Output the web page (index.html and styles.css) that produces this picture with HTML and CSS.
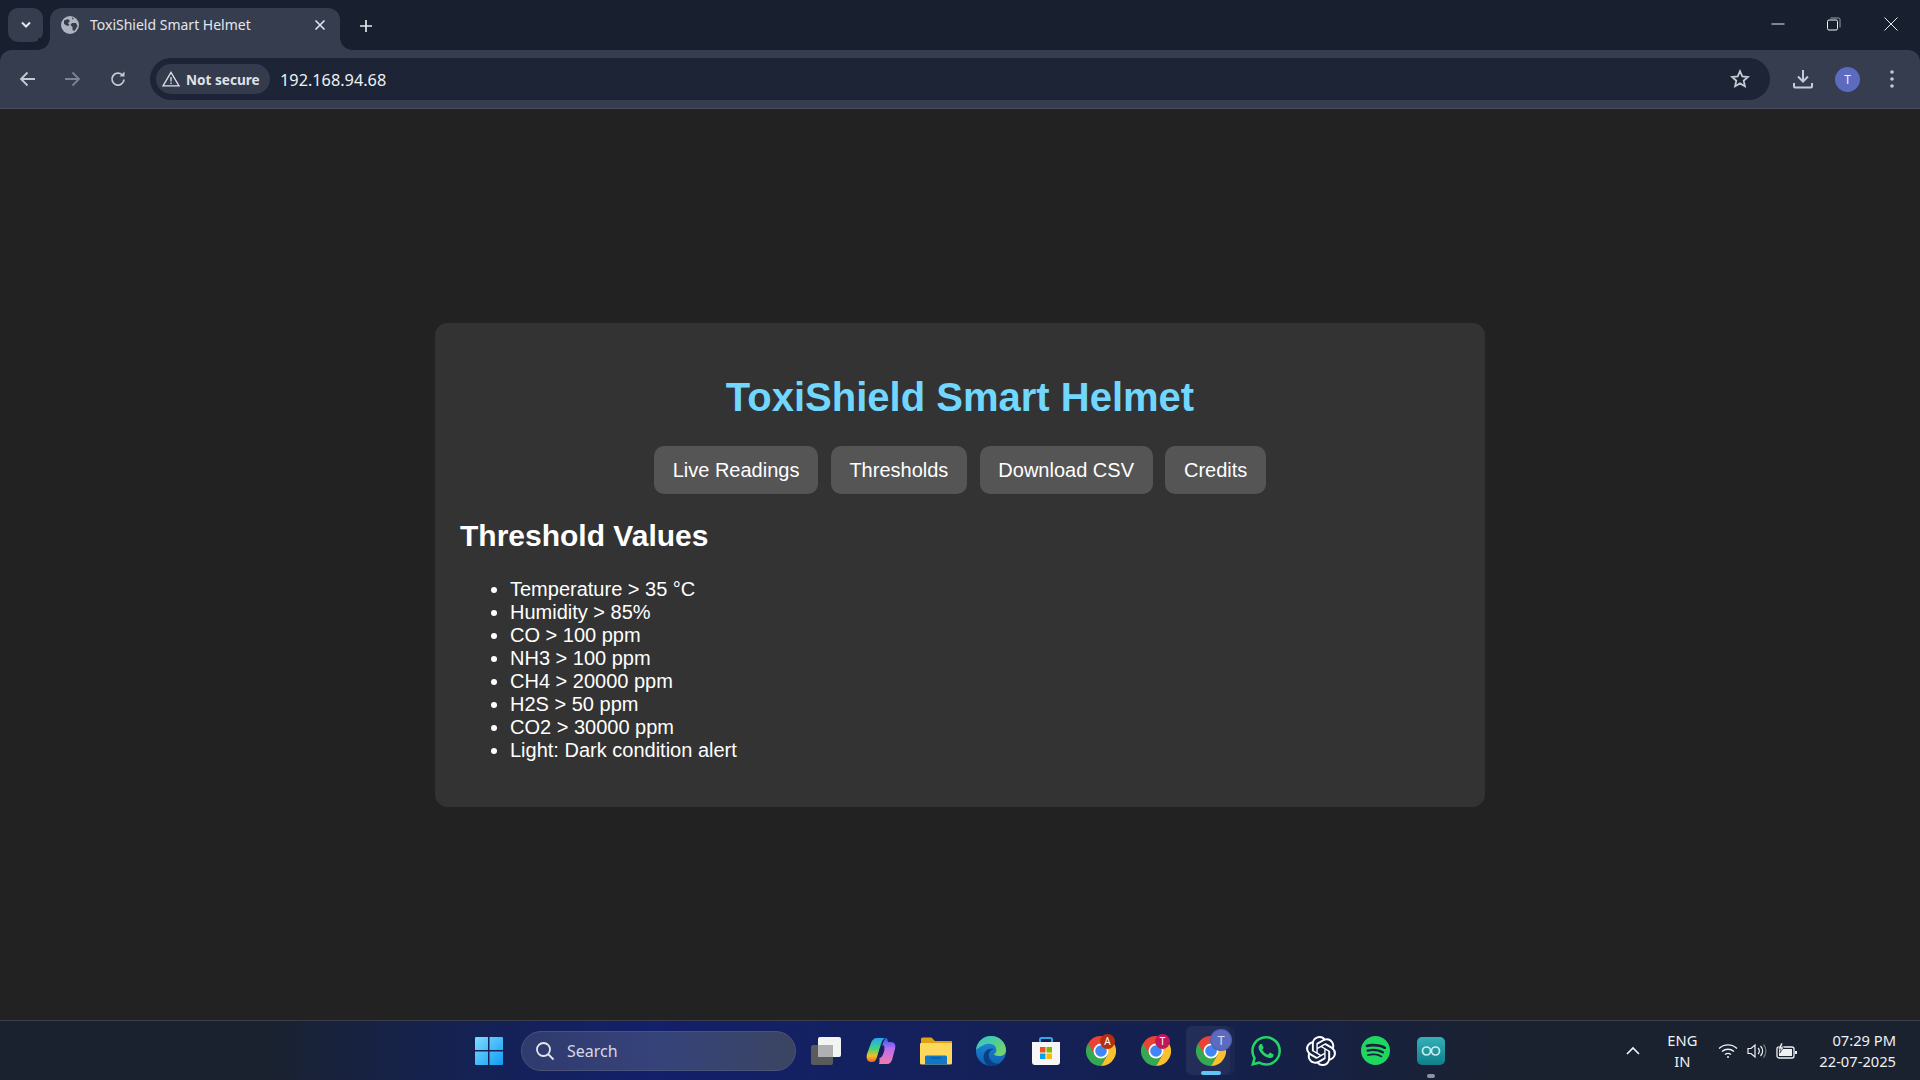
FILE: index.html
```html
<!DOCTYPE html>
<html lang="en">
<head>
<meta charset="utf-8">
<title>ToxiShield Smart Helmet</title>
<link rel="stylesheet" href="styles.css">
</head>
<body>
<svg class="defs" width="0" height="0" aria-hidden="true">
  <symbol id="chrome" viewBox="0 0 30 30">
    <path fill="#34a853" d="M2 7.5A15 15 0 0 0 15 30L21.5 18.75 15 15Z"/>
    <path fill="#fbc02d" d="M28 7.5A15 15 0 0 1 15 30L21.5 18.75 15 7.5Z"/>
    <path fill="#ea4335" d="M2 7.5A15 15 0 0 1 28 7.5H15L8.5 18.75Z"/>
    <circle cx="15" cy="15" r="7.5" fill="#fff"/>
    <circle cx="15" cy="15" r="5.8" fill="#4285f4"/>
  </symbol>
</svg>

<header class="tabstrip">
  <button class="tab-search" aria-label="Search tabs">
    <svg width="12" height="8" viewBox="0 0 12 8"><path d="M2 1.500l4 4 4-4" fill="none" stroke="#e3e6ec" stroke-width="2"/></svg>
  </button>
  <div class="tab">
    <svg class="favicon" width="18" height="18" viewBox="0 0 18 18">
      <circle cx="9" cy="9" r="9" fill="#aeb3bd"/>
      <path fill="#363d4e" d="M3 4.500 7 3l2 2-2 2 1.500 2-2 1L3 8ZM11 7h4l1.500 3-3 5-2-1V11L9.500 9ZM11 1.500l2 .8-1.500 1.500Z"/>
    </svg>
    <span class="tab-title">ToxiShield Smart Helmet</span>
    <svg class="tab-close" width="12" height="12" viewBox="0 0 12 12"><path d="M1.500 1.500l9 9m0-9l-9 9" stroke="#e3e6ec" stroke-width="1.600"/></svg>
  </div>
  <svg class="new-tab" width="14" height="14" viewBox="0 0 14 14"><path d="M7 1v12M1 7h12" stroke="#e3e6ec" stroke-width="1.700"/></svg>
  <div class="window-controls">
    <svg width="14" height="14" viewBox="0 0 14 14"><path d="M0.500 7h13" stroke="#e6e8ec" stroke-width="1"/></svg>
    <svg width="14" height="14" viewBox="0 0 14 14"><rect x="0.500" y="3" width="10" height="10" rx="1.500" fill="none" stroke="#f0f1f4"/><path d="M3.500 1h8a1.500 1.500 0 0 1 1.500 1.500v8" fill="none" stroke="#9aa0ab"/></svg>
    <svg width="14" height="14" viewBox="0 0 14 14"><path d="M.5.500l13 13m0-13l-13 13" stroke="#e6e8ec" stroke-width="1"/></svg>
  </div>
</header>

<nav class="toolbar">
  <svg class="tool back" width="18" height="16" viewBox="0 0 18 16"><path d="M16 8H2M8.500 1.500 2 8l6.500 6.500" fill="none" stroke="#c4c9d2" stroke-width="1.800"/></svg>
  <svg class="tool fwd" width="18" height="16" viewBox="0 0 18 16"><path d="M2 8h14M9.500 1.500 16 8l-6.500 6.500" fill="none" stroke="#7d8390" stroke-width="1.800"/></svg>
  <svg class="tool reload" width="18" height="18" viewBox="0 0 18 18"><path d="M15 9.500a6 6 0 1 1-1.800-4.700" fill="none" stroke="#c4c9d2" stroke-width="1.800"/><path d="M15.500 1.500v5h-5z" fill="#c4c9d2"/></svg>
  <div class="omnibox">
    <div class="chip">
      <svg width="18" height="16" viewBox="0 0 18 16"><path d="M9 1.300 17 14.800H1Z" fill="none" stroke="#dfe2e8" stroke-width="1.300"/><path d="M9 6v4.500M9 11.500v1.500" stroke="#dfe2e8" stroke-width="1.300"/></svg>
      <span>Not secure</span>
    </div>
    <span class="url">192.168.94.68</span>
    <svg class="star" width="20" height="20" viewBox="0 0 20 20"><path d="M10 2.200l2.300 5.200 5.600.6-4.200 3.700 1.200 5.500L10 14.400l-4.900 2.800 1.200-5.500L2.100 8l5.600-.6Z" fill="none" stroke="#c4c9d2" stroke-width="1.800"/></svg>
  </div>
  <svg class="tool download" width="20" height="20" viewBox="0 0 20 20"><path d="M10 1v11M5 7.500l5 5 5-5" fill="none" stroke="#c4cbd9" stroke-width="2"/><path d="M1 14v3.500a1 1 0 0 0 1 1h16a1 1 0 0 0 1-1V14" fill="none" stroke="#c4cbd9" stroke-width="2"/></svg>
  <div class="avatar">T</div>
  <svg class="tool kebab" width="4" height="18" viewBox="0 0 4 18"><circle cx="2" cy="2" r="1.800" fill="#c4c9d2"/><circle cx="2" cy="9" r="1.800" fill="#c4c9d2"/><circle cx="2" cy="16" r="1.800" fill="#c4c9d2"/></svg>
</nav>

<main class="viewport">
  <section class="card">
    <h1>ToxiShield Smart Helmet</h1>
    <div class="menu">
      <button class="btn">Live Readings</button>
      <button class="btn">Thresholds</button>
      <button class="btn">Download CSV</button>
      <button class="btn">Credits</button>
    </div>
    <h2>Threshold Values</h2>
    <ul>
      <li>Temperature &gt; 35 °C</li>
      <li>Humidity &gt; 85%</li>
      <li>CO &gt; 100 ppm</li>
      <li>NH3 &gt; 100 ppm</li>
      <li>CH4 &gt; 20000 ppm</li>
      <li>H2S &gt; 50 ppm</li>
      <li>CO2 &gt; 30000 ppm</li>
      <li>Light: Dark condition alert</li>
    </ul>
  </section>
</main>

<footer class="taskbar">
  <div class="task-spacer"></div>
  <div class="task-center">
    <div class="slot start">
      <svg width="30" height="30" viewBox="0 0 30 30">
        <defs><linearGradient id="win" x1="0" y1="0" x2="1" y2="1"><stop offset="0" stop-color="#7fdcff"/><stop offset="1" stop-color="#0f9bf5"/></linearGradient></defs>
        <path fill="url(#win)" d="M1 2a1 1 0 0 1 1-1h12v13H1ZM15.500 1H28a1 1 0 0 1 1 1v12H15.500ZM1 15.500h13V29H2a1 1 0 0 1-1-1ZM15.500 15.500H29V28a1 1 0 0 1-1 1H15.500Z"/>
      </svg>
    </div>
    <div class="search">
      <svg width="20" height="20" viewBox="0 0 20 20"><circle cx="8.500" cy="8.500" r="6.500" fill="none" stroke="#e4e7ee" stroke-width="1.800"/><path d="M13 13l5.500 5.500" stroke="#e4e7ee" stroke-width="1.800"/></svg>
      <span>Search</span>
    </div>
    <div class="slot">
      <svg width="32" height="30" viewBox="0 0 32 30"><rect x="1" y="9" width="22" height="20" rx="2" fill="#5a5a5c"/><rect x="8" y="1" width="23" height="20" rx="2" fill="#f3f3f4"/><rect x="8" y="9" width="15" height="12" fill="#b0b0b2"/></svg>
    </div>
    <div class="slot">
      <svg width="30" height="30" viewBox="0 0 30 30">
        <defs>
          <linearGradient id="cpa" x1="0" y1="0" x2="0" y2="1"><stop offset="0" stop-color="#22a6f2"/><stop offset=".45" stop-color="#45d47c"/><stop offset=".75" stop-color="#f5c020"/><stop offset="1" stop-color="#f0602c"/></linearGradient>
          <linearGradient id="cpb" x1="0" y1="0" x2="0" y2="1"><stop offset="0" stop-color="#2c5ce8"/><stop offset=".4" stop-color="#b86cf0"/><stop offset="1" stop-color="#f27ca8"/></linearGradient>
        </defs>
        <path fill="url(#cpa)" d="M11 2h8c-2 1-3 3-4 6l-4 13c-1 3-2 5-5 5H5C1 26 0 22 1 18l4-11c1-3 3-5 6-5Z"/>
        <path fill="url(#cpb)" d="M13 28h8c3 0 4-2 5-4l3-11c1-4 0-7-4-7h-3l-1-4c-2 0-3 2-4 5l-3 11c-1 4 0 8-1 10Z"/>
        <ellipse cx="15.500" cy="15.500" rx="2.400" ry="6.500" transform="rotate(17 15.500 15.500)" fill="#15205a"/>
      </svg>
    </div>
    <div class="slot">
      <svg width="32" height="28" viewBox="0 0 32 28">
        <path fill="#e0a213" d="M1 2a1.500 1.500 0 0 1 1.500-1.500h9L15 4h17v6H1Z"/>
        <path fill="#ffd75a" d="M1 6h30a1 1 0 0 1 1 1v19a1.500 1.500 0 0 1-1.500 1.500h-29A1.500 1.500 0 0 1 0 26V7a1 1 0 0 1 1-1Z"/>
        <path fill="#0f78c8" d="M5 27.500V20a1.500 1.500 0 0 1 1.500-1.500h19A1.500 1.500 0 0 1 27 20v7.500Z"/>
        <path stroke="#0a4f8c" stroke-width="1" d="M11 21h10"/>
      </svg>
    </div>
    <div class="slot">
      <svg width="30" height="30" viewBox="0 0 30 30">
        <defs>
          <linearGradient id="edge1" x1="0" y1="0" x2="1" y2="1"><stop offset="0" stop-color="#2bc4c9"/><stop offset="1" stop-color="#7ed957"/></linearGradient>
          <linearGradient id="edge2" x1="0" y1="0" x2="0" y2="1"><stop offset="0" stop-color="#1f8fe0"/><stop offset="1" stop-color="#0f5fb0"/></linearGradient>
        </defs>
        <circle cx="15" cy="15" r="15" fill="url(#edge2)"/>
        <path fill="url(#edge1)" d="M0 14C1 5 8 0 15 0c9 0 15 7 15 14 0 4-3 6-7 6-3 0-5-1-5-2 3-1 3-5 1-8-3-3-9-3-13 0-3 1-5 3-6 4Z"/>
        <path fill="#0a3f85" d="M13 30C8 27 6 21 9 16c2-3 6-4 9-3-4 1-6 4-5 8 1 4 5 7 10 7-3 2-6 2-10 2Z"/>
      </svg>
    </div>
    <div class="slot">
      <svg width="30" height="30" viewBox="0 0 30 30">
        <path d="M9 6V3.500A1.500 1.500 0 0 1 10.500 2h9A1.500 1.500 0 0 1 21 3.500V6" fill="none" stroke="#2fa8e8" stroke-width="2"/>
        <path fill="#f7f7f7" d="M1 6h28v20a3 3 0 0 1-3 3H4a3 3 0 0 1-3-3Z"/>
        <rect x="9" y="11" width="5.500" height="5.500" fill="#f25022"/><rect x="15.500" y="11" width="5.500" height="5.500" fill="#7fba00"/><rect x="9" y="17.500" width="5.500" height="5.500" fill="#00a4ef"/><rect x="15.500" y="17.500" width="5.500" height="5.500" fill="#ffb900"/>
      </svg>
    </div>
    <div class="slot"><svg width="30" height="30"><use href="#chrome"/></svg><span class="badge badge-a">A</span></div>
    <div class="slot"><svg width="30" height="30"><use href="#chrome"/></svg><span class="badge badge-t">T</span></div>
    <div class="slot active">
      <svg width="30" height="30"><use href="#chrome"/></svg><span class="badge badge-me">T</span><i class="indicator"></i>
    </div>
    <div class="slot">
      <svg width="30" height="30" viewBox="0 0 24 24">
        <path fill="#25d366" d="M17.472 14.382c-.297-.149-1.758-.867-2.03-.967-.273-.099-.471-.148-.67.15-.197.297-.767.966-.94 1.164-.173.199-.347.223-.644.075-.297-.15-1.255-.463-2.39-1.475-.883-.788-1.48-1.761-1.653-2.059-.173-.297-.018-.458.13-.606.134-.133.298-.347.446-.52.149-.174.198-.298.298-.497.099-.198.05-.371-.025-.52-.075-.149-.669-1.612-.916-2.207-.242-.579-.487-.5-.669-.51-.173-.008-.371-.01-.57-.01-.198 0-.52.074-.792.372-.272.297-1.04 1.016-1.04 2.479 0 1.462 1.065 2.875 1.213 3.074.149.198 2.096 3.2 5.077 4.487.709.306 1.262.489 1.694.625.712.227 1.36.195 1.871.118.571-.085 1.758-.719 2.006-1.413.248-.694.248-1.289.173-1.413-.074-.124-.272-.198-.57-.347m-5.421 7.403h-.004a9.87 9.87 0 01-5.031-1.378l-.361-.214-3.741.982.998-3.648-.235-.374a9.86 9.86 0 01-1.51-5.26c.001-5.45 4.436-9.884 9.888-9.884 2.64 0 5.122 1.03 6.988 2.898a9.825 9.825 0 012.893 6.994c-.003 5.45-4.437 9.884-9.885 9.884m8.413-18.297A11.815 11.815 0 0012.05 0C5.495 0 .16 5.335.157 11.892c0 2.096.547 4.142 1.588 5.945L.057 24l6.305-1.654a11.882 11.882 0 005.683 1.448h.005c6.554 0 11.89-5.335 11.893-11.893a11.821 11.821 0 00-3.48-8.413Z"/>
      </svg>
    </div>
    <div class="slot">
      <svg width="30" height="30" viewBox="0 0 24 24">
        <path fill="#fff" d="M22.2819 9.8211a5.9847 5.9847 0 0 0-.5157-4.9108 6.0462 6.0462 0 0 0-6.5098-2.9A6.0651 6.0651 0 0 0 4.9807 4.1818a5.9847 5.9847 0 0 0-3.9977 2.9 6.0462 6.0462 0 0 0 .7427 7.0966 5.98 5.98 0 0 0 .511 4.9107 6.051 6.051 0 0 0 6.5146 2.9001A5.9847 5.9847 0 0 0 13.2599 24a6.0557 6.0557 0 0 0 5.7718-4.2058 5.9894 5.9894 0 0 0 3.9977-2.9001 6.0557 6.0557 0 0 0-.7475-7.0729zm-9.022 12.6081a4.4755 4.4755 0 0 1-2.8764-1.0408l.1419-.0804 4.7783-2.7582a.7948.7948 0 0 0 .3927-.6813v-6.7369l2.02 1.1686a.071.071 0 0 1 .038.052v5.5826a4.504 4.504 0 0 1-4.4945 4.4944zm-9.6607-4.1254a4.4708 4.4708 0 0 1-.5346-3.0137l.142.0852 4.783 2.7582a.7712.7712 0 0 0 .7806 0l5.8428-3.3685v2.3324a.0804.0804 0 0 1-.0332.0615L9.74 19.9502a4.4992 4.4992 0 0 1-6.1408-1.6464zM2.3408 7.8956a4.485 4.485 0 0 1 2.3655-1.9728V11.6a.7664.7664 0 0 0 .3879.6765l5.8144 3.3543-2.0201 1.1685a.0757.0757 0 0 1-.071 0l-4.8303-2.7865A4.504 4.504 0 0 1 2.3408 7.872zm16.5963 3.8558L13.1038 8.364 15.1192 7.2a.0757.0757 0 0 1 .071 0l4.8303 2.7913a4.4944 4.4944 0 0 1-.6765 8.1042v-5.6772a.79.79 0 0 0-.407-.667zm2.0107-3.0231l-.142-.0852-4.7735-2.7818a.7759.7759 0 0 0-.7854 0L9.409 9.2297V6.8974a.0662.0662 0 0 1 .0284-.0615l4.8303-2.7866a4.4992 4.4992 0 0 1 6.6802 4.66zM8.3065 12.863l-2.02-1.1638a.0804.0804 0 0 1-.038-.0567V6.0742a4.4992 4.4992 0 0 1 7.3757-3.4537l-.142.0805L8.704 5.459a.7948.7948 0 0 0-.3927.6813zm1.0976-2.3654l2.602-1.4998 2.6069 1.4998v2.9994l-2.5974 1.4997-2.6067-1.4997Z"/>
      </svg>
    </div>
    <div class="slot">
      <svg width="29" height="29" viewBox="0 0 24 24">
        <path fill="#1ed760" d="M12 0C5.4 0 0 5.4 0 12s5.4 12 12 12 12-5.4 12-12S18.66 0 12 0zm5.521 17.34c-.24.359-.66.48-1.021.24-2.82-1.74-6.36-2.101-10.561-1.141-.418.122-.779-.179-.899-.539-.12-.421.18-.78.54-.9 4.56-1.021 8.52-.6 11.64 1.32.42.18.479.659.301 1.02zm1.44-3.3c-.301.42-.841.6-1.262.3-3.239-1.98-8.159-2.58-11.939-1.38-.479.12-1.02-.12-1.14-.6-.12-.48.12-1.021.6-1.141C9.6 9.9 15 10.561 18.72 12.84c.361.18.54.78.241 1.2zm.12-3.36C15.24 8.4 8.82 8.16 5.16 9.301c-.6.179-1.2-.181-1.38-.721-.18-.601.18-1.2.72-1.381 4.26-1.26 11.28-1.02 15.721 1.621.539.3.719 1.02.419 1.56-.299.421-1.02.599-1.559.3z"/>
      </svg>
    </div>
    <div class="slot">
      <svg width="28" height="28" viewBox="0 0 28 28">
        <defs><linearGradient id="ard" x1="0" y1="0" x2="0" y2="1"><stop offset="0" stop-color="#34b1b8"/><stop offset="1" stop-color="#0f7f88"/></linearGradient></defs>
        <rect width="28" height="28" rx="5" fill="url(#ard)"/>
        <circle cx="9.500" cy="14" r="4" fill="none" stroke="#c9eef0" stroke-width="1.700"/><circle cx="18.500" cy="14" r="4" fill="none" stroke="#c9eef0" stroke-width="1.700"/>
      </svg>
      <i class="indicator idle"></i>
    </div>
  </div>
  <div class="tray">
    <svg class="chev" width="14" height="9" viewBox="0 0 14 9"><path d="M1 8l6-6 6 6" fill="none" stroke="#f0f1f3" stroke-width="1.700"/></svg>
    <div class="lang">ENG<br>IN</div>
    <div class="tray-icons">
      <svg width="20" height="16" viewBox="0 0 20 16" fill="none" stroke="#f0f1f3" stroke-width="1.400"><path d="M1 5.500a13 13 0 0 1 18 0M4 8.500a9 9 0 0 1 12 0M7 11.500a5 5 0 0 1 6 0"/><circle cx="10" cy="14" r="1" fill="#f0f1f3" stroke="none"/></svg>
      <svg width="20" height="16" viewBox="0 0 20 16" fill="none" stroke="#f0f1f3" stroke-width="1.200"><path d="M1 5.500h3L8 2v12l-4-3.500H1Z"/><path d="M11 5a4 4 0 0 1 0 6M13.500 3a7 7 0 0 1 0 10"/><path d="M16.500 1.500a10 10 0 0 1 0 13" stroke="#777"/></svg>
      <svg width="22" height="16" viewBox="0 0 22 16"><rect x="1" y="4" width="17" height="11" rx="2" fill="none" stroke="#f0f1f3" stroke-width="1.300"/><rect x="3" y="6" width="13" height="7" fill="#f0f1f3"/><rect x="19" y="8" width="2" height="3" fill="#f0f1f3"/><path d="M5 0 2 6h3L4 10l4-6H5.500L7 0Z" fill="#f0f1f3" stroke="#1a2230" stroke-width=".6"/></svg>
    </div>
    <div class="clock"><span>07:29 PM</span><span>22-07-2025</span></div>
  </div>
</footer>
</body>
</html>
```

FILE: styles.css
```css
* { box-sizing: border-box; }
html, body { margin: 0; height: 100%; }
body {
  width: 1920px;
  height: 1080px;
  overflow: hidden;
  display: flex;
  flex-direction: column;
  background: #182030;
  font-family: "Liberation Sans", Arial, sans-serif;
  color: #fff;
}
.defs { position: absolute; }

/* Browser chrome */
.tabstrip {
  height: 50px;
  flex: none;
  background: #182030;
  display: flex;
  align-items: flex-end;
  padding-left: 8px;
}
.tab-search {
  width: 35px;
  height: 34px;
  margin: 0 7px 8px 0;
  padding: 0;
  border: 0;
  border-radius: 10px;
  background: #363d4e;
  display: flex;
  align-items: center;
  justify-content: center;
}
.tab {
  position: relative;
  width: 290px;
  height: 42px;
  background: #363d4e;
  border-radius: 12px 12px 0 0;
  display: flex;
  align-items: center;
  padding: 0 14px 9px 11px;
}
.tab::before, .tab::after {
  content: "";
  position: absolute;
  bottom: 0;
  width: 12px;
  height: 12px;
  background: radial-gradient(circle at 100% 0, #182030 11.500px, #363d4e 12px);
}
.tab::before { left: -12px; transform: scaleX(-1); }
.tab::after { right: -12px; }
.favicon { flex: none; }
.tab-title {
  flex: 1;
  margin-left: 11px;
  font: 14px "Noto Sans", "Open Sans", sans-serif;
  color: #e3e6ec;
}
.tab-close { flex: none; }
.new-tab { margin: 0 0 17px 19px; }
.window-controls {
  margin-left: auto;
  align-self: flex-start;
  display: flex;
  gap: 42px;
  padding: 17px 22px 0 0;
}
.window-controls svg:last-child { margin-left: 1px; }

.toolbar {
  height: 59px;
  flex: none;
  background: #363d4e;
  border-radius: 12px 12px 0 0;
  border-bottom: 1px solid #454b5a;
  display: flex;
  align-items: center;
  position: relative;
}
.back { margin-left: 19px; }
.fwd { margin-left: 26px; }
.reload { margin-left: 28px; }
.omnibox {
  width: 1620px;
  height: 42px;
  margin-left: 23px;
  background: #1c2435;
  border-radius: 21px;
  display: flex;
  align-items: center;
  padding: 0 20px 0 6px;
}
.chip {
  height: 30px;
  width: 114px;
  border-radius: 15px;
  background: #343b4c;
  display: flex;
  align-items: center;
  gap: 6px;
  padding-left: 6px;
  font: 700 13.600px "Noto Sans", "Open Sans", sans-serif;
  color: #dfe2e8;
}
.url {
  margin: 2px 0 0 10px;
  font: 16.300px "Noto Sans", "Open Sans", sans-serif;
  color: #eef0f4;
}
.star { margin-left: auto; }
.download { margin-left: 23px; }
.avatar {
  width: 25px;
  height: 25px;
  margin-left: 22px;
  border-radius: 50%;
  background: #5c6bc0;
  font: 12px/25px "Noto Sans", sans-serif;
  text-align: center;
  color: #eef0f8;
}
.kebab { margin-left: 30px; }

/* Page */
.viewport {
  flex: 1;
  display: flex;
  align-items: center;
  justify-content: center;
  padding-top: 1px;
  background: #222;
}
.card {
  width: 1050px;
  padding: 25px;
  background: #333;
  border-radius: 12.500px;
  font-size: 20px;
}
h1 {
  margin: 27.800px 0 26px;
  font-size: 40px;
  text-align: center;
  color: #72d7ff;
}
.menu {
  display: flex;
  justify-content: center;
  gap: 12.500px;
}
.btn {
  padding: 13px 18.750px 12px;
  border: 0;
  border-radius: 10px;
  background: #555;
  color: #fff;
  font: 20px "Liberation Sans", Arial, sans-serif;
}
h2 {
  margin: 25px 0 24.900px;
  font-size: 30px;
}
ul {
  margin: 20px 0;
  padding-left: 50px;
}

/* Taskbar */
.taskbar {
  height: 60px;
  flex: none;
  border-top: 1px solid #3a3f4a;
  background: linear-gradient(90deg, #1a2230 0, #1a2230 14%, #152250 23%, #13206a 34%, #14215a 50%, #15204a 65%, #1a2230 78%);
  display: grid;
  grid-template-columns: 1fr auto 1fr;
  align-items: center;
}
.task-center { display: flex; align-items: center; height: 100%; }
.slot {
  position: relative;
  width: 55px;
  height: 100%;
  display: flex;
  align-items: center;
  justify-content: center;
}
.slot.start { padding-right: 2px; }
.search {
  width: 275px;
  height: 40px;
  margin: 0 2px 0 4px;
  border-radius: 20px;
  background: linear-gradient(90deg, #2f3a6e, #36437a 50%, #3a4562);
  border: 1px solid #4a5379;
  display: flex;
  align-items: center;
  gap: 12px;
  padding-left: 13px;
  font: 16px "Noto Sans", "Open Sans", sans-serif;
  color: #d6d9e4;
}
.badge {
  position: absolute;
  border-radius: 50%;
  font: 10px/15px "Noto Sans", sans-serif;
  text-align: center;
  color: #fff;
  width: 15px;
  height: 15px;
  top: 13px;
  right: 13px;
}
.badge-a { background: #b5300c; }
.badge-t { background: #c2185b; }
.active {
  width: 49px;
  height: 49px;
  margin: 0 3px;
  border-radius: 6px;
  background: #1c2650;
}
.active::before {
  content: "";
  position: absolute;
  inset: 0 5px 0 0;
  border-radius: 6px;
  background: #222d58;
}
.active svg { position: relative; }
.active .badge-me {
  background: #5c6bc0;
  color: #d5daf2;
  width: 20px;
  height: 20px;
  font-size: 13px;
  line-height: 20px;
  top: 4px;
  left: 25px;
  right: auto;
  box-shadow: 0 0 0 1px #4f5eb0;
}
.indicator {
  position: absolute;
  left: 50%;
  bottom: 0;
  width: 20px;
  height: 4px;
  margin-left: -10px;
  border-radius: 2px;
  background: #62c4f5;
}
.indicator.idle {
  bottom: 2px;
  width: 8px;
  margin-left: -4px;
  background: #8d93a0;
}
.tray {
  display: flex;
  align-items: center;
  justify-content: flex-end;
  color: #f0f1f3;
  font: 14.700px/21px "Noto Sans", "Open Sans", sans-serif;
}
.chev { margin-right: 27px; }
.lang { text-align: center; margin-right: 21px; }
.tray-icons { display: flex; align-items: center; gap: 9px; margin-right: 21px; }
.clock {
  display: flex;
  flex-direction: column;
  align-items: flex-end;
  padding-right: 24px;
}
```
